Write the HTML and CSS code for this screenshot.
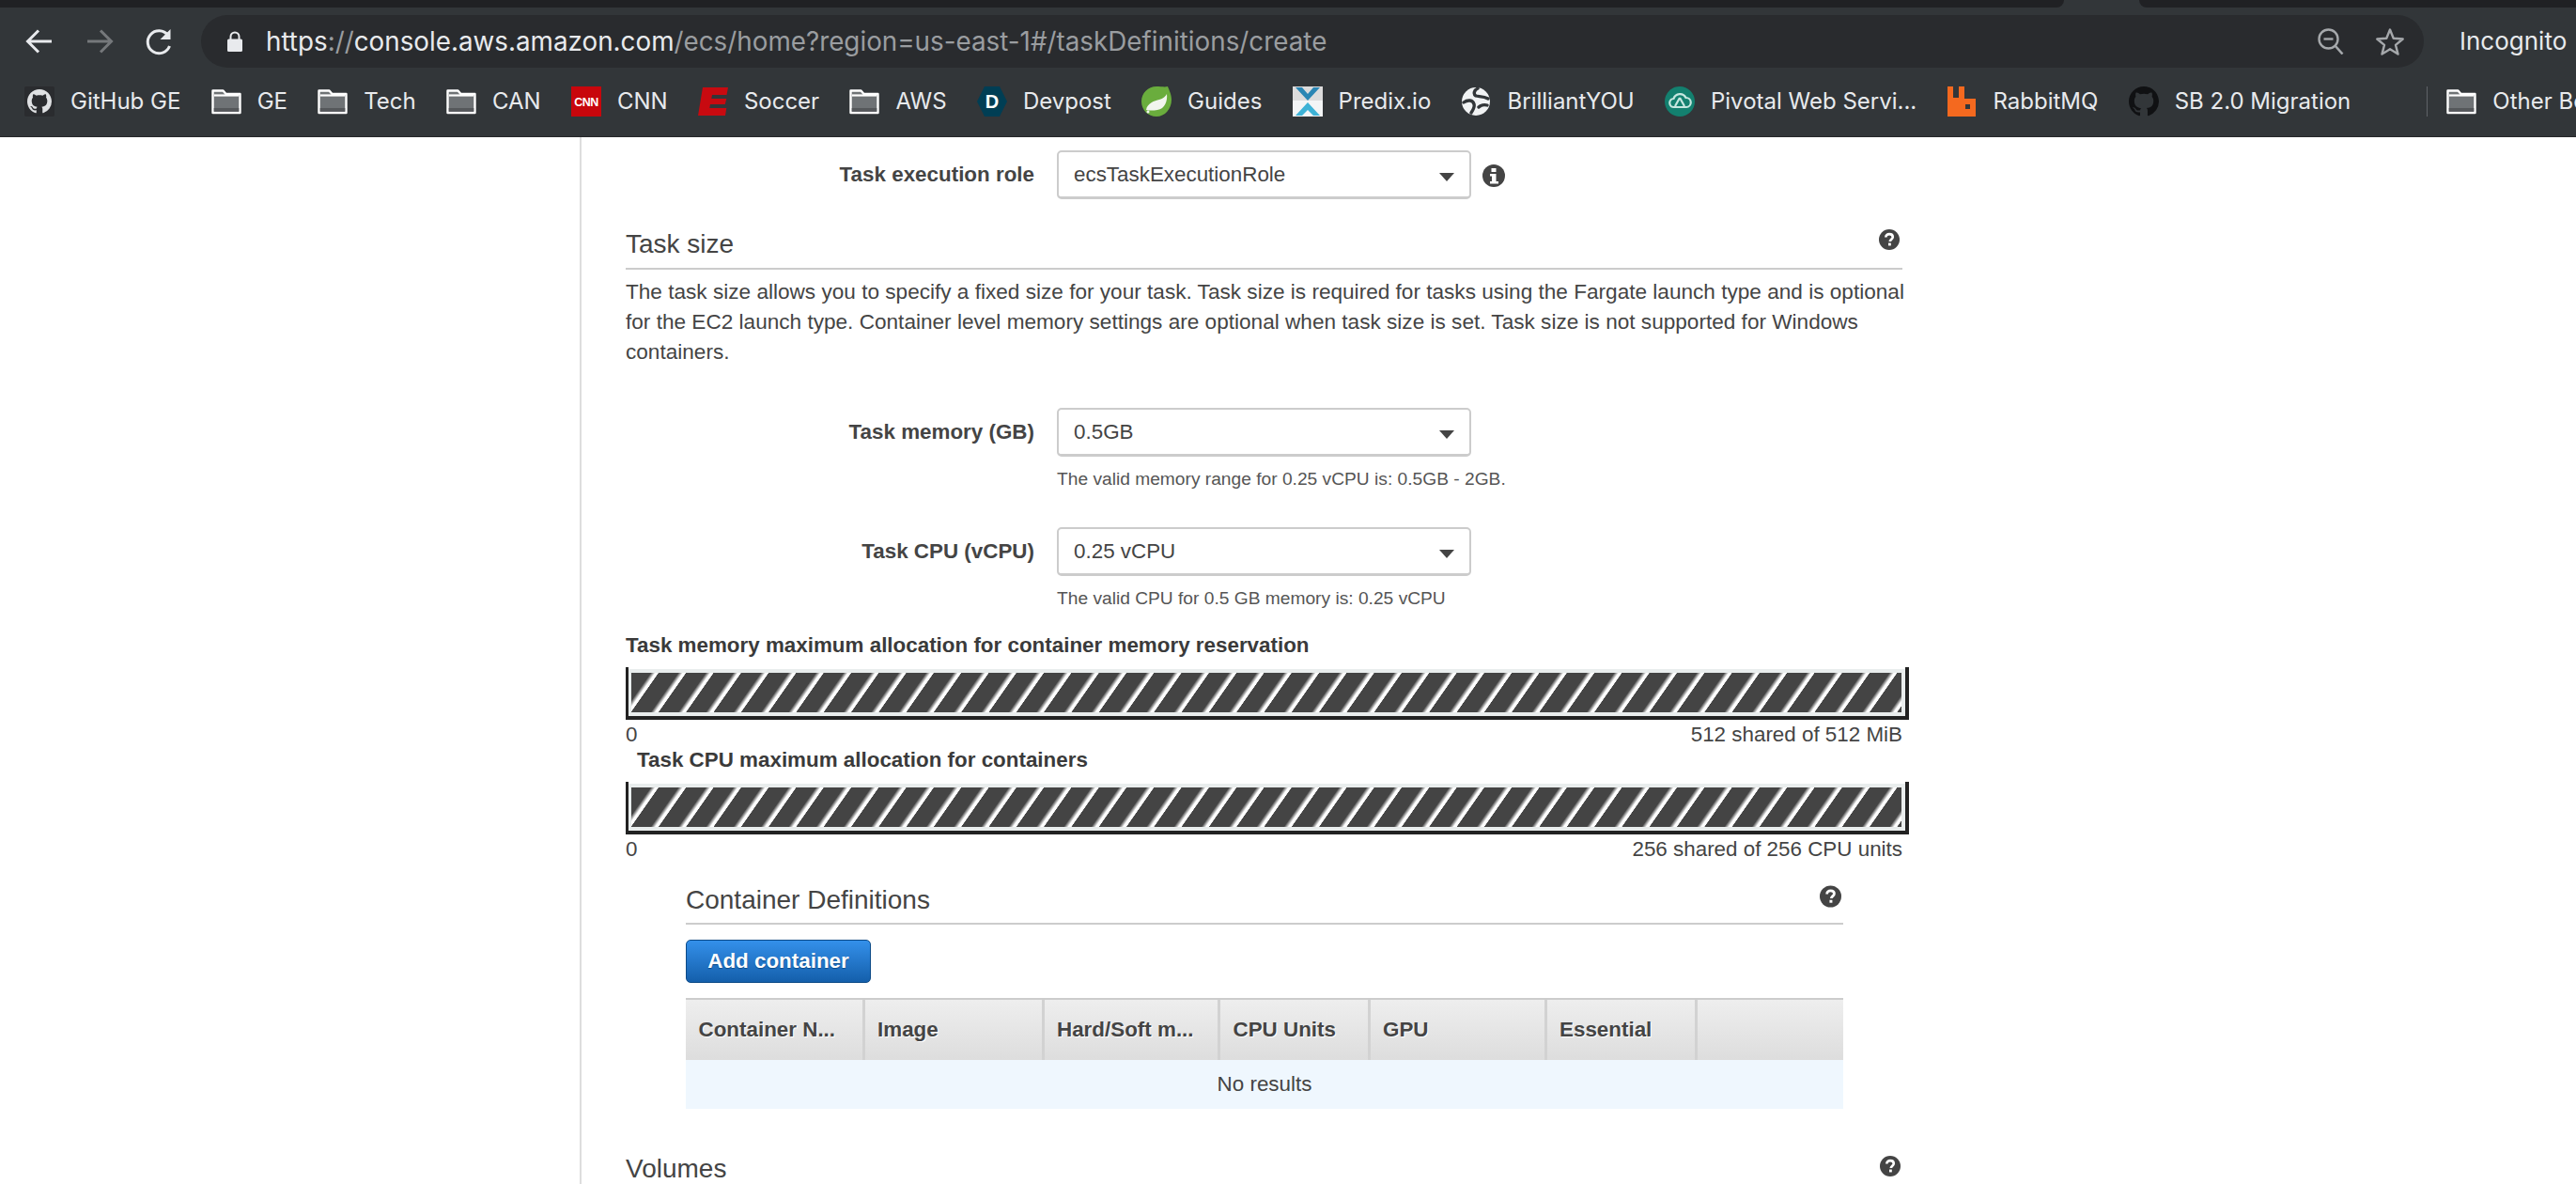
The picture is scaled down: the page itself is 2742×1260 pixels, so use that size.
FILE: index.html
```html
<!DOCTYPE html>
<html lang="en">
<head>
<meta charset="utf-8">
<title>Create Task Definition</title>
<link rel="stylesheet" href="styles.css">
</head>
<body>
<svg class="defs" width="0" height="0" aria-hidden="true">
  <symbol id="folder" viewBox="0 0 32 32">
    <path d="M1.5 4.5h11l3 3.5h15v20h-29z" fill="#6f7376" stroke="#fff" stroke-width="2.4" stroke-linejoin="round"/>
    <path d="M3 9.5h26" stroke="#fff" stroke-width="2.2"/>
    <rect x="2.7" y="23" width="26.6" height="3.8" fill="#55585b"/>
  </symbol>
  <symbol id="octo" viewBox="0 0 16 16">
    <path d="M8 0C3.58 0 0 3.58 0 8c0 3.54 2.29 6.53 5.47 7.59.4.07.55-.17.55-.38 0-.19-.01-.82-.01-1.49-2.01.37-2.53-.49-2.69-.94-.09-.23-.48-.94-.82-1.13-.28-.15-.68-.52-.01-.53.63-.01 1.08.58 1.23.82.72 1.21 1.87.87 2.33.66.07-.52.28-.87.51-1.07-1.78-.2-3.64-.89-3.64-3.95 0-.87.31-1.59.82-2.15-.08-.2-.36-1.02.08-2.12 0 0 .67-.21 2.2.82.64-.18 1.32-.27 2-.27s1.36.09 2 .27c1.53-1.04 2.2-.82 2.2-.82.44 1.1.16 1.92.08 2.12.51.56.82 1.27.82 2.15 0 3.07-1.87 3.75-3.65 3.95.29.25.54.73.54 1.48 0 1.07-.01 1.93-.01 2.2 0 .21.15.46.55.38A8.01 8.01 0 0016 8c0-4.42-3.58-8-8-8z"/>
  </symbol>
  <symbol id="help" viewBox="0 0 24 24">
    <circle cx="12" cy="12" r="12" fill="#444"/>
    <path d="M8 9.3c0-2.4 1.8-3.7 4.1-3.7 2.3 0 4 1.3 4 3.3 0 2.7-3.2 2.8-3.2 5.3" fill="none" stroke="#fff" stroke-width="2.9"/>
    <rect x="10.9" y="15.9" width="3.1" height="3.1" fill="#fff"/>
  </symbol>
</svg>

<header class="chrome">
  <div class="tabstrip"><div class="strip-left"></div><div class="strip-active"></div><div class="strip-right"></div></div>
  <div class="toolbar">
    <svg class="nav" viewBox="0 0 32 32"><path d="M29 16H4M15 4.500L3.500 16 15 27.500" fill="none" stroke="#e8eaed" stroke-width="3"/></svg>
    <svg class="nav" viewBox="0 0 32 32"><path d="M3 16h25M17 4.500L28.500 16 17 27.500" fill="none" stroke="#75787b" stroke-width="3"/></svg>
    <svg class="nav" viewBox="0 0 32 32"><path d="M26.500 21a12 12 0 1 1-1.700-11.500" fill="none" stroke="#e8eaed" stroke-width="3"/><path d="M27.500 3v11h-11z" fill="#e8eaed"/></svg>
    <div class="omnibox">
      <svg class="lock" viewBox="0 0 16 22"><path d="M3.500 10V6a4.500 4.500 0 0 1 9 0v4" fill="none" stroke="#e8eaed" stroke-width="2"/><rect y="8.500" width="16" height="13.500" rx="1.500" fill="#e8eaed"/></svg>
      <span class="url"><span class="url-host">https</span><span class="url-path">://</span><span class="url-host">console.aws.amazon.com</span><span class="url-path">/ecs/home?region=us-east-1#/taskDefinitions/create</span></span>
      <svg class="zoom-icon" viewBox="0 0 28 28"><circle cx="11.500" cy="11.500" r="10" fill="none" stroke="#a5a8ab" stroke-width="2.400"/><path d="M6.500 11.500h10" stroke="#a5a8ab" stroke-width="2.400"/><path d="M18.500 18.500l8 9" stroke="#a5a8ab" stroke-width="2.600"/></svg>
      <svg class="star" viewBox="0 0 32 32"><path d="M16 3.500l3.700 9.300 10 .7-7.700 6.400 2.500 9.700L16 24.300l-8.500 5.300 2.500-9.700-7.700-6.400 10-.7z" fill="none" stroke="#a5a8ab" stroke-width="2.400" stroke-linejoin="round"/></svg>
    </div>
    <span class="incognito">Incognito</span>
  </div>
  <nav class="bookmarks">
    <a class="bm"><svg class="bm-icon bm-gh-box" viewBox="0 0 32 32"><svg x="3" y="3" width="26" height="26" viewBox="0 0 16 16" fill="#dfe1e3"><use href="#octo"/></svg></svg>GitHub GE</a>
    <a class="bm"><svg class="bm-icon"><use href="#folder"/></svg>GE</a>
    <a class="bm"><svg class="bm-icon"><use href="#folder"/></svg>Tech</a>
    <a class="bm"><svg class="bm-icon"><use href="#folder"/></svg>CAN</a>
    <a class="bm"><svg class="bm-icon" viewBox="0 0 32 32"><rect width="32" height="32" fill="#c8060c"/><text class="cnn-mark" x="16" y="21">CNN</text></svg>CNN</a>
    <a class="bm"><svg class="bm-icon" viewBox="0 0 32 32"><path d="M5 1h27l-1.500 8H15l-.7 4h16l-1.500 6H13l-.7 4h18L29 31H0z" fill="#c80a10"/></svg>Soccer</a>
    <a class="bm"><svg class="bm-icon"><use href="#folder"/></svg>AWS</a>
    <a class="bm"><svg class="bm-icon" viewBox="0 0 32 32"><path d="M8 0h16l8 16-8 16H8L0 16z" fill="#003e54"/><text class="dev-mark" x="16" y="23">D</text></svg>Devpost</a>
    <a class="bm"><svg class="bm-icon" viewBox="0 0 32 32"><path d="M16 0c5 0 9 1 12-0 1 3 4 8 4 14 0 10-7 18-16 18S0 25 0 16 7 0 16 0z" fill="#6aad3d"/><path d="M5 25c1-7 9-10 14-11 4-1 7-4 8-6 1 7-2 16-10 17-4 .6-8 1-12 0z" fill="#f2f5ef"/><circle cx="7" cy="27" r="1.500" fill="#f2f5ef"/></svg>Guides</a>
    <a class="bm"><svg class="bm-icon" viewBox="0 0 32 32"><rect width="32" height="32" fill="#f3f5f6"/><rect width="32" height="15" fill="#dcdcdc"/><path d="M3 1h7l6 7 6-7h7L16 15z" fill="#2a86b4"/><path d="M16 17L3 31h7l6-6 6 6h7z" fill="#3db2d6"/></svg>Predix.io</a>
    <a class="bm"><svg class="bm-icon" viewBox="0 0 32 32"><circle cx="15" cy="16" r="15" fill="#f1f3f4"/><path d="M17 2c-4 2-5 6-2 8 3 1 8 0 13 3M2 17c4-3 10-3 11 2 1 3-1 6-3 9M18 22c2-2 6-3 9-2" fill="none" stroke="#323639" stroke-width="3.400" stroke-linecap="round"/></svg>BrilliantYOU</a>
    <a class="bm"><svg class="bm-icon" viewBox="0 0 32 32"><circle cx="16" cy="16" r="16" fill="#13806f"/><path d="M10 22a4.500 4.500 0 0 1-.5-9 7 7 0 0 1 13-1 5 5 0 0 1 .5 10zM16 12l-5 9M16 12l5 9" fill="none" stroke="#c5e6df" stroke-width="2.200"/></svg>Pivotal Web Servi...</a>
    <a class="bm"><svg class="bm-icon" viewBox="0 0 32 32"><path d="M0 0h6v12h6V0h6v13h12v19H0z" fill="#f4691f"/><rect x="19" y="19" width="5" height="5" fill="#323639"/></svg>RabbitMQ</a>
    <a class="bm"><svg class="bm-icon" viewBox="0 0 16 16" fill="#101113"><use href="#octo"/></svg>SB 2.0 Migration</a>
    <span class="bm-sep"></span>
    <a class="bm"><svg class="bm-icon"><use href="#folder"/></svg>Other Bookmarks</a>
  </nav>
</header>

<main class="page">
  <div class="form-row form-row-first">
    <label class="field-label">Task execution role</label>
    <div class="select">ecsTaskExecutionRole<span class="caret"></span></div>
    <svg class="info" viewBox="0 0 24 24"><circle cx="12" cy="12" r="12" fill="#444"/><rect x="9.500" y="4" width="5" height="4" fill="#fff"/><path d="M8 10h6.500v8H17v2.500H8V18h2v-5.500H8z" fill="#fff"/></svg>
  </div>

  <div class="section-head section-task">
    <h2>Task size</h2>
    <svg class="help"><use href="#help"/></svg>
  </div>
  <p class="desc">The task size allows you to specify a fixed size for your task. Task size is required for tasks using the Fargate launch type and is optional for the EC2 launch type. Container level memory settings are optional when task size is set. Task size is not supported for Windows containers.</p>

  <div class="form-row form-row-mem">
    <label class="field-label">Task memory (GB)</label>
    <div class="select">0.5GB<span class="caret"></span></div>
  </div>
  <p class="hint">The valid memory range for 0.25 vCPU is: 0.5GB - 2GB.</p>

  <div class="form-row form-row-cpu">
    <label class="field-label">Task CPU (vCPU)</label>
    <div class="select">0.25 vCPU<span class="caret"></span></div>
  </div>
  <p class="hint">The valid CPU for 0.5 GB memory is: 0.25 vCPU</p>

  <section class="alloc alloc-mem">
    <h3 class="alloc-title">Task memory maximum allocation for container memory reservation</h3>
    <div class="bar"><div class="bar-fill"></div></div>
    <div class="legend"><span>0</span><span>512 shared of 512 MiB</span></div>
  </section>
  <section class="alloc">
    <h3 class="alloc-title alloc-title-cpu">Task CPU maximum allocation for containers</h3>
    <div class="bar"><div class="bar-fill"></div></div>
    <div class="legend"><span>0</span><span>256 shared of 256 CPU units</span></div>
  </section>

  <section class="containers">
    <div class="section-head section-containers">
      <h2>Container Definitions</h2>
      <svg class="help help-large"><use href="#help"/></svg>
    </div>
    <button class="btn-add" type="button">Add container</button>
    <div class="table">
      <div class="th">Container N...</div>
      <div class="th">Image</div>
      <div class="th">Hard/Soft m...</div>
      <div class="th">CPU Units</div>
      <div class="th">GPU</div>
      <div class="th">Essential</div>
      <div class="th th-last"></div>
      <div class="no-results">No results</div>
    </div>
  </section>

  <div class="section-head section-volumes">
    <h2>Volumes</h2>
    <svg class="help help-volumes"><use href="#help"/></svg>
  </div>
</main>
</body>
</html>
```

FILE: styles.css
```css
* { box-sizing: border-box; }

html, body {
  margin: 0;
  height: 1260px;
  overflow: hidden;
  background: #fff;
}

body {
  display: flex;
  flex-direction: column;
  font-family: "Liberation Sans", Arial, sans-serif;
  font-size: 22.4px;
  line-height: 32px;
  color: #444;
}

.defs { position: absolute; }

/* Browser chrome */
.chrome {
  flex: 0 0 146px;
  background: #323639;
  font-family: Inter, "Noto Sans", sans-serif;
  color: #e8eaed;
  overflow: hidden;
}

.tabstrip { display: flex; height: 8px; }
.strip-left { flex: 0 0 2197px; background: #202124; border-bottom-right-radius: 8px; }
.strip-active { flex: 0 0 80px; }
.strip-right { flex: 1; background: #202124; border-bottom-left-radius: 8px; }

.toolbar {
  display: flex;
  align-items: center;
  gap: 32px;
  height: 72px;
  padding: 8px 0 8px 26px;
}

.nav { width: 32px; height: 32px; flex: none; }

.omnibox {
  display: flex;
  align-items: center;
  flex: 0 0 2366px;
  height: 56px;
  margin-left: -4px;
  padding: 0 20px 0 28px;
  border-radius: 28px;
  background: #292b2e;
}

.lock { width: 16px; height: 22px; flex: none; margin-right: 25px; }
.url { font-size: 27.8px; white-space: nowrap; }
.url-host { color: #e8eaed; }
.url-path { color: #9a9da0; }
.zoom-icon { width: 28px; height: 28px; margin-left: auto; }
.star { width: 32px; height: 32px; margin-left: 33px; }

.incognito {
  margin-left: 6px;
  font-size: 26px;
  white-space: nowrap;
}

.bookmarks {
  display: flex;
  align-items: center;
  gap: 32.250px;
  height: 66px;
  padding: 0 0 9px 26px;
  border-bottom: 1px solid #26282a;
  white-space: nowrap;
}

.bm {
  display: flex;
  align-items: center;
  gap: 17px;
  flex: none;
  font-size: 24px;
  line-height: 32px;
}

.bm-icon { width: 32px; height: 32px; flex: none; }
.bm-gh-box { background: #2a2c2f; border-radius: 2px; }
.cnn-mark { font: 700 12.5px "Liberation Sans", sans-serif; letter-spacing: -0.5px; fill: #fff; text-anchor: middle; }
.dev-mark { font: 700 20px "Liberation Sans", sans-serif; fill: #fff; text-anchor: middle; }
.bm-sep { width: 1px; height: 32px; margin: 0 -12.250px 0 48.750px; background: #5f6368; flex: none; }

/* Page */
.page {
  flex: 1;
  margin-left: 617px;
  padding: 14px 0 0 47px;
  border-left: 2px solid #ddd;
  overflow: hidden;
}

.form-row {
  display: flex;
  align-items: flex-start;
}

.field-label {
  flex: 0 0 435px;
  padding-top: 10px;
  text-align: right;
  font-weight: 700;
}

.select {
  position: relative;
  flex: 0 0 441px;
  height: 52px;
  margin-left: 24px;
  padding: 8px 16px;
  border: 2px solid #ccc;
  border-bottom-width: 3px;
  border-radius: 5px;
  background: #fff;
}

.caret {
  position: absolute;
  top: 22px;
  right: 16px;
  border-left: 8px solid transparent;
  border-right: 8px solid transparent;
  border-top: 9px solid #444;
}

.info { width: 24px; height: 24px; margin: 15px 0 0 12px; flex: none; }

.section-head {
  display: flex;
  align-items: flex-start;
  justify-content: space-between;
  height: 49px;
  width: 1359px;
  border-bottom: 2px solid #ccc;
}

.section-head h2 {
  margin: 0;
  font-size: 28px;
  font-weight: 400;
  line-height: 44px;
}

.help { width: 22px; height: 22px; flex: none; margin: 6px 3px 0 0; }
.help-large { width: 23px; height: 24px; margin: 6px 2px 0 0; }
.help-volumes { margin-top: 8px; margin-right: 2px; }

.section-task { margin-top: 26px; }

.desc {
  margin: 8px 0 0;
  width: 1380px;
  font-size: 22.6px;
}

.form-row-mem { margin-top: 43px; }
.form-row-cpu { margin-top: 37px; }

.hint {
  margin: 10px 0 0 459px;
  font-size: 19.2px;
  line-height: 28px;
  color: #555;
}

.alloc-mem { margin-top: 22px; }

.alloc-title {
  margin: 0;
  font-size: 22.4px;
  font-weight: 700;
  line-height: 28px;
  color: #3a3a3a;
}

.alloc-title-cpu { margin-left: 12px; }

.bar {
  width: 1366px;
  height: 56px;
  margin-top: 9px;
  padding: 2px 4px 4px 3px;
  background: linear-gradient(#222, #222) left top / 3px 100% no-repeat,
              linear-gradient(#222, #222) right top / 4px 100% no-repeat,
              linear-gradient(#222, #222) left bottom / 100% 4px no-repeat,
              #fff;
}

.bar-fill {
  height: 100%;
  border-style: solid;
  border-color: #e9eded;
  border-width: 4px 4px 4px 3px;
  background: repeating-linear-gradient(125deg, #444 0, #444 17px, #fff 21px, #fff 23.500px, #444 24px);
  background-origin: padding-box;
  background-clip: padding-box;
}

.legend {
  display: flex;
  justify-content: space-between;
  width: 1359px;
  height: 29px;
  font-size: 22.4px;
  line-height: 32px;
  color: #444;
}

.containers {
  width: 1232px;
  margin-left: 64px;
}

.section-containers { width: 1232px; height: 67px; padding-top: 19px; }

.btn-add {
  display: block;
  height: 46px;
  width: 197px;
  margin: 16px 0 0;
  padding: 0;
  border: 1px solid #0c4a87;
  border-radius: 5px;
  background: linear-gradient(#3490ea, #145fab);
  font: 700 22.4px/32px "Liberation Sans", Arial, sans-serif;
  color: #fff;
  text-shadow: 0 1px 1px #0c4a87;
}

.table {
  display: grid;
  grid-template-columns: 190.500px 191px 187.500px 159.500px 188px 160.500px 1fr;
  margin-top: 16px;
  border-top: 2px solid #ccc;
}

.th {
  height: 64px;
  padding-left: 13.500px;
  border-right: 3px solid #d2d2d2;
  background: linear-gradient(#eee, #ddd);
  font-weight: 700;
  line-height: 64px;
  color: #444;
  text-shadow: 1px 1px 0 #fff;
  white-space: nowrap;
  overflow: hidden;
}

.th-last { border-right: 0; }

.no-results {
  grid-column: 1 / -1;
  height: 52px;
  background: #eff7fe;
  text-align: center;
  line-height: 52px;
}

.section-volumes { margin-top: 42px; border-bottom: 0; }
```
